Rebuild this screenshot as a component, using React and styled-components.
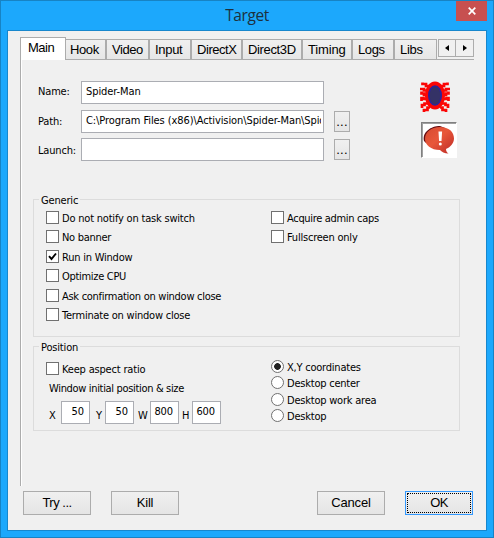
import React from 'react';
import styled, { createGlobalStyle, css } from 'styled-components';

const GlobalStyle = createGlobalStyle`
  *, *::before, *::after { box-sizing: border-box; }
  body { margin: 0; background: #1ca8fc; overflow: hidden; }
  button, input { font: inherit; color: inherit; margin: 0; padding: 0; border-radius: 0; }
`;

const Window = styled.div`
  width: 494px;
  height: 538px;
  display: flex;
  flex-direction: column;
  padding: 0 6px 6px;
  background: #1ca8fc;
  border: 1px solid #1783c4;
  color: #000;
  font: 11px/14px 'DejaVu Sans Condensed', 'DejaVu Sans', sans-serif;
  font-stretch: condensed;
  white-space: nowrap;
`;

const TitleBar = styled.header`
  height: 29px;
  display: grid;
  grid-template-columns: 31px 1fr 31px;
  align-items: start;
`;

const Title = styled.h1`
  grid-column: 2;
  margin: 0;
  padding-top: 2px;
  text-align: center;
  font: 400 15.5px/24px 'Open Sans', sans-serif;
  letter-spacing: -0.4px;
  color: #1d303d;
`;

const CloseButton = styled.button`
  width: 31px;
  height: 20px;
  border: 0;
  background: #c75050;
  display: flex;
  align-items: center;
  justify-content: center;
`;

const Client = styled.main`
  flex: 1;
  display: flex;
  flex-direction: column;
  padding: 6px 12px 0;
  background: #f0f0f0;
  border: 1px solid #1787cd;
`;

const TabStrip = styled.nav`
  height: 23px;
  display: flex;
  align-items: flex-end;
  font: 13px/17px 'Liberation Sans', Arial, sans-serif;
`;

const Tab = styled.button`
  width: ${(p) => p.$width}px;
  height: 21px;
  padding: 0 0 1px ${(p) => (p.$first ? 4 : 5)}px;
  border: 1px solid #acacac;
  border-left-width: ${(p) => (p.$first ? 0 : 1)}px;
  background: linear-gradient(#f0f0f0, #e6e6e6);
  text-align: left;
  letter-spacing: ${(p) => p.$spacing || 0}px;
  ${(p) => p.$active && css`
    height: 23px;
    padding: 0 0 3px 7px;
    border-left-width: 1px;
    border-bottom: 0;
    background: #fff;
  `}
`;

const Scroller = styled.div`
  align-self: stretch;
  width: 37px;
  display: flex;
  padding: 2px 0 0 1px;
  border-bottom: 1px solid #acacac;
`;

const ScrollButton = styled.button`
  width: 18px;
  height: 18px;
  border: 1px solid #acacac;
  background: #f0f0f0;
  display: flex;
  align-items: center;
  justify-content: center;
  & + & { margin-left: -1px; width: 19px; }
`;

const Page = styled.section`
  height: 426px;
  width: 453px;
  padding: 21px 12px 0 12px;
  border-left: 1px solid #acacac;
  box-shadow: inset 1px 0 #fff;
`;

const Target = styled.div`
  display: flex;
  height: 111px;
`;

const Fields = styled.div`
  display: flex;
  flex-direction: column;
  width: 366px;
  padding-left: 5px;
`;

const FieldRow = styled.div`
  height: ${(p) => p.$height}px;
  display: grid;
  grid-template-columns: 43px 243px 16px;
  align-items: start;
`;

const FieldLabel = styled.label`
  padding-top: ${(p) => p.$drop}px;
  letter-spacing: -0.17px;
`;

const TextField = styled.input`
  height: 23px;
  width: 100%;
  padding: ${(p) => (p.$number ? '0 5px 3px 0' : '0 2px 3px 4px')};
  border: 1px solid #abadb3;
  background: #fff;
  text-align: ${(p) => (p.$number ? 'right' : 'left')};
  letter-spacing: -0.09px;
  outline: 0;
`;

const BrowseButton = styled.button`
  width: 16px;
  height: 21px;
  margin: 1px 0 0 10px;
  border: 1px solid #acacac;
  background: linear-gradient(#f0f0f0, #e5e5e5);
  font: 13px/15px 'Liberation Sans', Arial, sans-serif;
  letter-spacing: 0.3px;
`;

const Icons = styled.div`
  display: flex;
  flex-direction: column;
  gap: 9px;
  padding-left: 21px;
`;

const SpiderIcon = styled.svg`
  display: block;
  width: 30px;
  height: 32px;
`;

const AlertFrame = styled.div`
  width: 36px;
  height: 36px;
  margin-left: 1px;
  background: #fff;
  border: 1px solid;
  border-color: #808080 #fff #fff #808080;
  box-shadow: inset 1px 1px #a0a0a0;
`;

const Group = styled.fieldset`
  width: 427px;
  height: ${(p) => p.$height}px;
  margin: 0 0 2px;
  padding: 0 0 0 12px;
  min-width: 0;
  border: 1px solid #dcdcdc;
  display: grid;
  grid-template-columns: 225px 1fr;
  align-items: start;
`;

const Legend = styled.legend`
  height: 14px;
  margin-left: -7px;
  padding: 0 2px;
  line-height: 17px;
  letter-spacing: -0.17px;
`;

const Stack = styled.div`
  display: flex;
  flex-direction: column;
  padding-top: ${(p) => p.$top}px;
`;

const Option = styled.label`
  height: ${(p) => p.$height || 19}px;
  display: flex;
  align-items: flex-start;
  gap: 3px;
  line-height: 16px;
  letter-spacing: ${(p) => p.$spacing ?? -0.22}px;
`;

const CheckBox = styled.span`
  width: 13px;
  height: 13px;
  border: 1px solid #707070;
  background: #fff;
  svg { display: block; }
`;

const Radio = styled.span`
  width: 13px;
  height: 13px;
  border: 1px solid #707070;
  border-radius: 50%;
  background: ${(p) => (p.$checked ? 'radial-gradient(circle, #222 0 3px, #fff 3.7px)' : '#fff')};
`;

const SizeCaption = styled.div`
  height: 20px;
  padding: 1px 0 0 3px;
  letter-spacing: -0.33px;
`;

const SizeRow = styled.div`
  display: grid;
  grid-template-columns: 12px 29px 15px 29px 16px 29px 13px 29px;
  padding-left: 3px;
`;

const Axis = styled.label`
  padding-top: 8px;
  padding-left: ${(p) => p.$inset || 0}px;
`;

const Actions = styled.footer`
  display: flex;
  padding: 5px 0 0 3px;
`;

const Action = styled.button`
  width: 68px;
  height: 24px;
  margin-right: ${(p) => p.$gap || 0}px;
  padding: 0 0 1px;
  border: 1px solid ${(p) => (p.$default ? '#3399ff' : '#acacac')};
  background: linear-gradient(#f0f0f0, #e5e5e5);
  font: 13px/16px 'Liberation Sans', Arial, sans-serif;
  letter-spacing: ${(p) => p.$spacing ?? -0.2}px;
  outline: ${(p) => (p.$default ? '1px dotted #000' : '0')};
  outline-offset: -3px;
`;

const tabs = [
  ['Main', 46, -0.5], ['Hook', 40, -0.4], ['Video', 43, -0.45], ['Input', 42, -0.3], ['DirectX', 51, -0.45],
  ['Direct3D', 60, -0.35], ['Timing', 50, -0.15], ['Logs', 42, -0.4], ['Libs', 43, -0.3],
];

const generic = [
  { label: 'Do not notify on task switch', height: 19, spacing: -0.2 },
  { label: 'No banner', height: 20, spacing: -0.28 },
  { label: 'Run in Window', height: 19, checked: true },
  { label: 'Optimize CPU', height: 20, spacing: -0.3 },
  { label: 'Ask confirmation on window close', height: 19, spacing: -0.28 },
  { label: 'Terminate on window close', height: 19 },
];

const positions = [
  ['X,Y coordinates', 16, true], ['Desktop center', 17], ['Desktop work area', 16], ['Desktop', 16],
];

function Check({ label, height, checked, spacing }) {
  return (
    <Option $height={height} $spacing={spacing}>
      <CheckBox>
        {checked && (
          <svg width="11" height="11" viewBox="0 0 11 11">
            <path d="M2 5.2 4.5 8 9 2.5" fill="none" stroke="#000" strokeWidth="1.9" />
          </svg>
        )}
      </CheckBox>
      {label}
    </Option>
  );
}

function Spider() {
  return (
    <SpiderIcon viewBox="0 0 30 32">
      <path
        d="M10 5H6V3H2.500V1.500M20 5H24V3H27.500V1.500M8 9.500H4V8H0M22 9.500H26V8H30M8 14H4V12.500H1.500V10.500M22 14H26V12.500H28.500V10.500M8 18H3.500V17H1.500V20M22 18H26.500V17H28.500V20M9 22.500H4.500V24H2V27M21 22.500H25.500V24H28V27M10 26.500H7.500V29H4V31M20 26.500H22.500V29H26V31"
        fill="none" stroke="#fb0505" strokeWidth="2.700"
      />
      <ellipse cx="15" cy="14.5" rx="10" ry="14" fill="#fb0505" />
      <ellipse cx="15" cy="14.5" rx="7" ry="10.3" fill="#2d2399" />
      <ellipse cx="15" cy="14.5" rx="5.3" ry="8.7" fill="#343266" />
    </SpiderIcon>
  );
}

function Alert() {
  return (
    <svg width="34" height="34" viewBox="0 0 34 34">
      <defs>
        <linearGradient id="bubble" x1="0" y1="0" x2="1" y2="1">
          <stop offset="0" stopColor="#d64a30" />
          <stop offset=".45" stopColor="#e8573a" />
          <stop offset="1" stopColor="#bd2a25" />
        </linearGradient>
      </defs>
      <path d="M2 18C0 9 9 3 18 3l5 2C12 5 4 10 4 20Z" fill="#650c10" />
      <path d="M18 4C27 4 32 9 32 15.500c0 5-4 9-8 10.500 0 2 1 3.500 2.500 4.500-4-.2-7-1.500-8.500-3.500C9 27 3 22 3 16 3 9 9 4 18 4Z" fill="url(#bubble)" />
      <path d="M16.500 8.500h3.600l-.6 9.500h-2.400Z" fill="#fff" />
      <circle cx="18.300" cy="21" r="1.500" fill="#fff" />
    </svg>
  );
}

export default function App() {
  return (
    <>
      <GlobalStyle />
      <Window>
        <TitleBar>
          <Title>Target</Title>
          <CloseButton aria-label="Close">
            <svg width="8" height="8" viewBox="0 0 8 8">
              <path d="M.7.7 7.300 7.300M7.300.7.7 7.300" stroke="#fff" strokeWidth="1.700" />
            </svg>
          </CloseButton>
        </TitleBar>
        <Client>
          <TabStrip>
            {tabs.map(([name, width, spacing], i) => (
              <Tab key={name} $width={width} $spacing={spacing} $active={i === 0} $first={i === 1}>{name}</Tab>
            ))}
            <Scroller>
              <ScrollButton aria-label="Scroll left">
                <svg width="4" height="6" viewBox="0 0 4 6"><path d="M4 0v6L0 3Z" /></svg>
              </ScrollButton>
              <ScrollButton aria-label="Scroll right">
                <svg width="4" height="6" viewBox="0 0 4 6"><path d="M0 0v6l4-3Z" /></svg>
              </ScrollButton>
            </Scroller>
          </TabStrip>
          <Page>
            <Target>
              <Fields>
                <FieldRow $height={29}>
                  <FieldLabel $drop={4}>Name:</FieldLabel>
                  <TextField readOnly value="Spider-Man" />
                </FieldRow>
                <FieldRow $height={28}>
                  <FieldLabel $drop={5}>Path:</FieldLabel>
                  <TextField readOnly value="C:\Program Files (x86)\Activision\Spider-Man\Spider" />
                  <BrowseButton>...</BrowseButton>
                </FieldRow>
                <FieldRow $height={28}>
                  <FieldLabel $drop={6}>Launch:</FieldLabel>
                  <TextField readOnly value="" />
                  <BrowseButton>...</BrowseButton>
                </FieldRow>
              </Fields>
              <Icons>
                <Spider />
                <AlertFrame><Alert /></AlertFrame>
              </Icons>
            </Target>
            <Group $height={145}>
              <Legend>Generic</Legend>
              <Stack $top={5}>
                {generic.map((item) => <Check key={item.label} {...item} />)}
              </Stack>
              <Stack $top={5}>
                <Check label="Acquire admin caps" spacing={-0.32} />
                <Check label="Fullscreen only" />
              </Stack>
            </Group>
            <Group $height={92}>
              <Legend>Position</Legend>
              <Stack $top={9}>
                <Check label="Keep aspect ratio" height={19} spacing={-0.18} />
                <SizeCaption>Window initial position &amp; size</SizeCaption>
                <SizeRow>
                  <Axis>X</Axis><TextField $number readOnly value="50" />
                  <Axis $inset={6}>Y</Axis><TextField $number readOnly value="50" />
                  <Axis $inset={4}>W</Axis><TextField $number readOnly value="800" />
                  <Axis $inset={3}>H</Axis><TextField $number readOnly value="600" />
                </SizeRow>
              </Stack>
              <Stack $top={7}>
                {positions.map(([label, height, checked]) => (
                  <Option key={label} $height={height}><Radio $checked={checked} />{label}</Option>
                ))}
              </Stack>
            </Group>
          </Page>
          <Actions>
            <Action $gap={20} $spacing={-0.5}>Try ...</Action>
            <Action $gap={138}>Kill</Action>
            <Action $gap={20}>Cancel</Action>
            <Action $default $spacing={-0.6}>OK</Action>
          </Actions>
        </Client>
      </Window>
    </>
  );
}
